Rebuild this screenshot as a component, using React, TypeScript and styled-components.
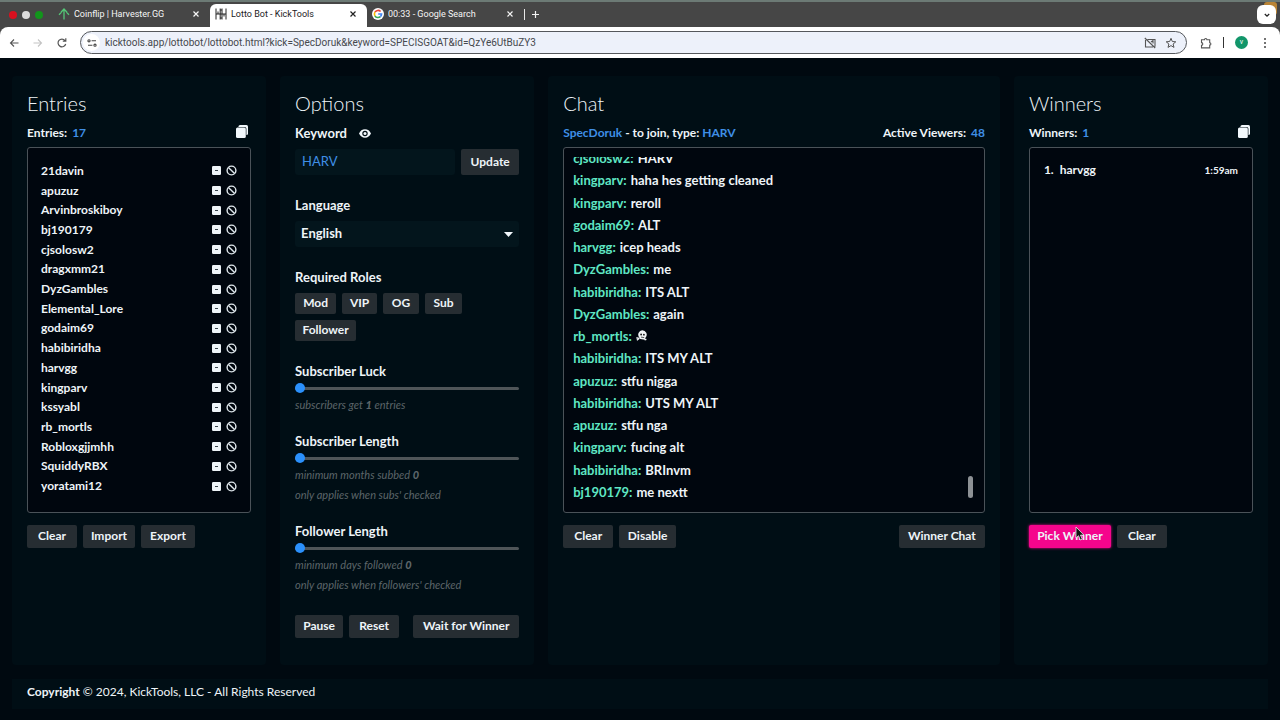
import React from "react";
import styled, { createGlobalStyle } from "styled-components";

const GlobalStyle = createGlobalStyle`
  *, *::before, *::after { box-sizing: border-box; }
  body {
    margin: 0;
    background: #000910;
    color: #eef4f8;
    font: 700 13px/20px Lato, "Open Sans", sans-serif;
  }
  button, input, select { font: inherit; color: inherit; }
  h2, p, ul, ol { margin: 0; padding: 0; }
  ul, ol { list-style: none; }
`;

/* ---------- browser chrome ---------- */

const Browser = styled.header`
  background: #464646;
  border-top: 2px solid #6c7a75;
  font-family: Roboto, Inter, sans-serif;
  font-weight: 400;
`;

const TabStrip = styled.div`
  display: flex;
  align-items: center;
  height: 25px;
  padding-right: 4px;
`;

const Lights = styled.div`
  display: flex;
  gap: 5px;
  width: 53px;
  padding-left: 9px;
`;

const Light = styled.span<{ $color: string }>`
  width: 8px;
  height: 8px;
  border-radius: 50%;
  background: ${(p) => p.$color};
`;

const Tab = styled.div<{ $active?: boolean }>`
  display: flex;
  align-items: center;
  gap: 4px;
  flex: 0 1 157px;
  align-self: flex-end;
  height: 23px;
  padding: 0 10px 3px 5px;
  border-radius: 6px 6px 0 0;
  background: ${(p) => (p.$active ? "#fff" : "transparent")};
  color: ${(p) => (p.$active ? "#222" : "#f6f6f6")};
  svg { flex: none; }
`;

const TabTitle = styled.span`
  flex: 1;
  min-width: 0;
  overflow: hidden;
  white-space: nowrap;
  font-size: 9px;
  line-height: 14px;
`;

const PlainButton = styled.button`
  display: flex;
  align-items: center;
  justify-content: center;
  padding: 0;
  border: 0;
  background: none;
`;

const Divider = styled.span<{ $color: string }>`
  width: 1px;
  height: 11px;
  background: ${(p) => p.$color};
`;

const NewTab = styled(PlainButton)`
  margin-left: 6px;
`;

const TabSearch = styled(PlainButton)`
  width: 19px;
  height: 19px;
  margin-left: auto;
  border-radius: 6px;
  background: #fff;
  color: #222;
  box-shadow: 4px -6px 0 -3px #b98436;
`;

const Toolbar = styled.div`
  display: flex;
  align-items: center;
  gap: 12px;
  height: 31px;
  padding: 0 13px 0 8px;
  border-radius: 8px 8px 0 0;
  background: #fff;
  color: #555;
`;

const AddressBar = styled.label`
  display: flex;
  align-items: center;
  gap: 9px;
  flex: 1;
  height: 23px;
  margin-right: 1px;
  padding: 0 9px 0 2px;
  border: 1px solid #55585c;
  border-radius: 12px;
  background: #edf1fa;
`;

const SiteInfo = styled.span`
  display: flex;
  align-items: center;
  justify-content: center;
  width: 17px;
  height: 17px;
  margin-right: -4px;
  border-radius: 50%;
  background: #fff;
`;

const AddressInput = styled.input`
  flex: 1;
  min-width: 0;
  padding: 0;
  border: 0;
  outline: 0;
  background: none;
  color: #45484d;
  font-size: 10px;
  line-height: 16px;
`;

const ToolbarEnd = styled.div`
  display: flex;
  align-items: center;
  gap: 11px;
`;

const Avatar = styled.span`
  width: 13px;
  height: 13px;
  margin-right: 4px;
  border-radius: 50%;
  background: #12966a;
  color: #fff;
  font-size: 7px;
  line-height: 12px;
  text-align: center;
`;

/* ---------- page ---------- */

const Page = styled.main`
  padding: 18px 12px 12px;
`;

const Panels = styled.div`
  display: grid;
  grid-template-columns: minmax(0, 9fr) minmax(0, 9fr) minmax(0, 16fr) minmax(0, 9fr);
  gap: 14px;
`;

const Panel = styled.section`
  padding: 15px 15px 27px;
  border-radius: 4px;
  background: #000e15;
`;

const Title = styled.h2`
  font-size: 20px;
  line-height: 24px;
  font-weight: 300;
`;

const MetaRow = styled.div`
  display: flex;
  justify-content: space-between;
  align-items: center;
  height: 20px;
  margin: 8px 0 4px;
  font-size: 12px;
`;

const Accent = styled.span`
  color: #3f8fe6;
`;

const Count = styled(Accent)`
  margin-left: 2px;
`;

const CopyButton = styled(PlainButton)`
  margin-right: 3px;
  padding-bottom: 3px;
`;

const Box = styled.div`
  position: relative;
  height: 366px;
  border: 1px solid #4a5258;
  border-radius: 3px;
  background: #00060e;
`;

const Entries = styled.ul`
  display: flex;
  flex-direction: column;
  height: 100%;
  padding: 13px 13px 16px;
`;

const Entry = styled.li`
  display: flex;
  align-items: center;
  flex: 1;
  gap: 5px;
  min-height: 0;
`;

const Name = styled.span`
  flex: 1;
  font-size: 12px;
  line-height: 18px;
`;

const Actions = styled.div`
  display: flex;
  flex-wrap: wrap;
  gap: 6px;
  margin-top: 12px;
`;

const Button = styled.button<{ $width: number; $height?: number; $push?: boolean; $primary?: boolean }>`
  min-width: ${(p) => p.$width}px;
  height: ${(p) => p.$height ?? 23}px;
  margin-left: ${(p) => (p.$push ? "auto" : "0")};
  padding: 0 0 1px;
  border: 0;
  border-radius: 2px;
  background: ${(p) => (p.$primary ? "#f5058c" : "#262d32")};
  box-shadow: ${(p) => (p.$primary ? "0 0 3px #f5058c" : "none")};
  font-size: 12px;
  line-height: 18px;
  white-space: nowrap;
`;

const Label = styled.label`
  display: block;
  line-height: 20px;
`;

const KeywordHead = styled.div`
  display: flex;
  align-items: center;
  gap: 12px;
  height: 20px;
  margin: 8px 0 6px;
`;

const KeywordRow = styled.div`
  display: flex;
  gap: 6px;
`;

const KeywordInput = styled.input`
  flex: 1;
  min-width: 0;
  height: 26px;
  padding: 0 7px 2px;
  border: 0;
  border-radius: 3px;
  background: #03151c;
  color: #3f8fe6;
  font-weight: 400;
`;

const Field = styled.div`
  margin-top: 20px;
`;

const SelectWrap = styled.div`
  position: relative;
  margin-top: 6px;
  svg {
    position: absolute;
    right: 6px;
    top: 11px;
    pointer-events: none;
  }
`;

const Select = styled.select`
  display: block;
  width: 100%;
  height: 26px;
  padding: 0 6px 2px;
  border: 0;
  border-radius: 3px;
  background: #03151c;
  appearance: none;
`;

const Roles = styled.div`
  display: flex;
  flex-wrap: wrap;
  gap: 6px;
  margin-top: 6px;
`;

const SliderField = styled.div`
  & + & { margin-top: 16px; }
`;

const Slider = styled.input`
  display: block;
  width: 100%;
  height: 14px;
  margin: 0;
  appearance: none;
  background: none;
  &::-webkit-slider-runnable-track {
    height: 3px;
    border-radius: 2px;
    background: #4f5558;
  }
  &::-webkit-slider-thumb {
    appearance: none;
    width: 10px;
    height: 10px;
    margin-top: -4px;
    border-radius: 50%;
    background: #2b90fb;
  }
`;

const Hint = styled.p`
  color: #5c6569;
  font-size: 11px;
  font-style: italic;
  font-weight: 400;
  line-height: 20px;
  b { font-weight: 900; }
`;

const ChatView = styled.div`
  height: 100%;
  padding: 9px;
`;

const ChatClip = styled.div`
  display: flex;
  flex-direction: column;
  justify-content: flex-end;
  height: 100%;
  overflow: hidden;
`;

const ChatLog = styled.ol`
  display: flex;
  flex-direction: column;
  flex: none;
  height: 356px;
`;

const Message = styled.li`
  display: flex;
  align-items: center;
  flex: 1;
  gap: 4px;
`;

const Author = styled.span`
  color: #5fe6c4;
`;

const ScrollThumb = styled.span`
  position: absolute;
  right: 11px;
  bottom: 14px;
  width: 5px;
  height: 22px;
  border-radius: 3px;
  background: #8d9195;
`;

const WinnerRow = styled.li`
  display: flex;
  gap: 6px;
  padding: 12px 14px;
  font-size: 12px;
`;

const Time = styled.time`
  margin-left: auto;
  font-size: 10px;
`;

const CursorHost = styled.span`
  position: relative;
  display: flex;
`;

const Cursor = styled.svg`
  position: absolute;
  left: 46px;
  top: 1px;
`;

const Footer = styled.footer`
  margin-top: 14px;
  padding: 3px 15px 7px;
  background: #000e15;
  font-size: 12px;
  font-weight: 400;
`;

/* ---------- icons ---------- */

const CloseIcon = () => (
  <svg width="8" height="8" viewBox="0 0 8 8" stroke="currentColor" strokeWidth="1.2">
    <path d="M1.5 1.5l5 5M6.5 1.5l-5 5" />
  </svg>
);

const HarvesterIcon = () => (
  <svg width="12" height="12" viewBox="0 0 12 12" fill="none" stroke="#55c878" strokeWidth="1.3">
    <path d="M6 11.500V1.200M3 4.200L6 1l3 3.200M1 6.800l2.400-2.400M11 6.800L8.600 4.400" />
  </svg>
);

const KickToolsIcon = () => (
  <svg width="12" height="12" viewBox="0 0 12 12" fill="none" stroke="#222" strokeWidth="1">
    <path d="M1 .5v11M5.200 .5v11M7 .5v11M11 .5v11M1 6h10M3 3.500V6M9 6v2.500M5.200 2H7M5.200 10H7" />
  </svg>
);

const GoogleIcon = () => (
  <svg width="12" height="12" viewBox="0 0 12 12" fill="none">
    <circle cx="6" cy="6" r="6" fill="#fff" />
    <path d="M2.900 4.200A3.600 3.600 0 0 1 8.600 3.500" stroke="#ea4335" strokeWidth="1.600" />
    <path d="M2.900 4.200a3.600 3.600 0 0 0 0 3.600" stroke="#fbbc05" strokeWidth="1.600" />
    <path d="M2.900 7.800a3.600 3.600 0 0 0 5.500.8" stroke="#34a853" strokeWidth="1.600" />
    <path d="M6.200 6h3.400a3.600 3.600 0 0 1-1.200 2.600" stroke="#4285f4" strokeWidth="1.600" />
  </svg>
);

const PlusIcon = () => (
  <svg width="9" height="9" viewBox="0 0 9 9" stroke="#f2f2f2" strokeWidth="1.2">
    <path d="M4.500 1v7M1 4.500h7" />
  </svg>
);

const ChevronIcon = () => (
  <svg width="8" height="8" viewBox="0 0 8 8" fill="none" stroke="currentColor" strokeWidth="1.3">
    <path d="M1.800 3L4 5.200 6.200 3" />
  </svg>
);

const ArrowIcon = ({ back }: { back?: boolean }) => (
  <svg width="12" height="12" viewBox="0 0 12 12" fill="none" stroke={back ? "#555" : "#c4c4c4"} strokeWidth="1.1">
    <path d={back ? "M10.500 6h-8M6 2.500L2.500 6 6 9.500" : "M1.500 6h8M6 2.500L9.500 6 6 9.500"} />
  </svg>
);

const ReloadIcon = () => (
  <svg width="12" height="12" viewBox="0 0 12 12" fill="none" stroke="#555" strokeWidth="1.2">
    <path d="M9.700 7A3.900 3.900 0 1 1 9 3.500M9.800 1.200v3H6.800" />
  </svg>
);

const TuneIcon = () => (
  <svg width="10" height="10" viewBox="0 0 10 10" fill="none" stroke="#444" strokeWidth="1.100">
    <circle cx="2" cy="2.800" r="1.100" />
    <path d="M4.600 2.800H9M1 7.200h4.400" />
    <circle cx="8" cy="7.200" r="1.100" />
  </svg>
);

const CastOffIcon = () => (
  <svg width="12" height="12" viewBox="0 0 12 12" fill="none" stroke="#555" strokeWidth="1.1">
    <path d="M3.500 2.500H11v7.200M9 10H1.500V3M.8 1l10.400 10M7 5l2-1.500v3" />
  </svg>
);

const StarIcon = () => (
  <svg width="12" height="12" viewBox="0 0 12 12" fill="none" stroke="#555" strokeWidth="1">
    <path d="M6 1.300l1.300 3.200 3.500.3-2.700 2.200.9 3.400L6 8.600l-3 1.800.9-3.400L1.200 4.800l3.500-.3z" />
  </svg>
);

const PuzzleIcon = () => (
  <svg width="12" height="12" viewBox="0 0 12 12" fill="none" stroke="#555" strokeWidth="1.100">
    <path d="M1.500 2.700h3a1.200 1.200 0 0 1 2.400 0h2.800v3a1.200 1.200 0 0 1 0 2.400v2.800H1.500V8.200a1.300 1.300 0 0 0 0-2.600z" />
  </svg>
);

const MoreIcon = () => (
  <svg width="4" height="12" viewBox="0 0 4 12" fill="#444">
    <circle cx="2" cy="2" r="1" />
    <circle cx="2" cy="6" r="1" />
    <circle cx="2" cy="10" r="1" />
  </svg>
);

const CopyIcon = () => (
  <svg width="12" height="13" viewBox="0 0 12 13">
    <rect x="2.500" y="0" width="9.500" height="10" rx="1.500" fill="#f2f8fc" />
    <rect x="-.6" y="2" width="11" height="12" rx="1.800" fill="#000e15" />
    <rect x="0" y="2.600" width="9.800" height="10.400" rx="1.500" fill="#f2f8fc" />
  </svg>
);

const MinusBoxIcon = () => (
  <svg width="9" height="9" viewBox="0 0 9 9">
    <rect width="9" height="9" rx="1.200" fill="#eef4f8" />
    <path d="M3 4.500h3" stroke="#37424a" strokeWidth="1" />
  </svg>
);

const BanIcon = () => (
  <svg width="11" height="11" viewBox="0 0 11 11" fill="none" stroke="#dfe7ec" strokeWidth="1.400">
    <circle cx="5.500" cy="5.500" r="4.400" />
    <path d="M2.400 2.400l6.200 6.200" />
  </svg>
);

const EyeIcon = () => (
  <svg width="12" height="9" viewBox="0 0 12 9">
    <path d="M0 4.500C1.200 1.800 3.300.3 6 .3s4.800 1.500 6 4.200C10.800 7.200 8.700 8.700 6 8.700S1.200 7.200 0 4.500z" fill="#f2f8fc" />
    <circle cx="6" cy="4.500" r="2.700" fill="#000e15" />
    <circle cx="6" cy="4.500" r="1.500" fill="#f2f8fc" />
  </svg>
);

const SkullIcon = () => (
  <svg width="11" height="11" viewBox="0 0 11 11">
    <path d="M6.200.3a4.400 4.400 0 0 1 3.400 7.300L9 9.800 4.200 9 2.900 6.900A4.300 4.300 0 0 1 6.200.3z" fill="#f0f3f5" />
    <path d="M.4 7.800l3 .8M.9 10.200l2.400-2M8.600 9.900l1.800-.6" stroke="#f0f3f5" strokeWidth="1.400" />
    <circle cx="5.100" cy="4.500" r=".9" fill="#111" />
    <circle cx="7.900" cy="4.700" r=".9" fill="#111" />
    <path d="M5 7.100l3.200.5" stroke="#111" strokeWidth=".7" />
  </svg>
);

/* ---------- data ---------- */

const entries = [
  "21davin", "apuzuz", "Arvinbroskiboy", "bj190179", "cjsolosw2", "dragxmm21",
  "DyzGambles", "Elemental_Lore", "godaim69", "habibiridha", "harvgg", "kingparv",
  "kssyabl", "rb_mortls", "Robloxgjjmhh", "SquiddyRBX", "yoratami12",
];

const messages: [string, React.ReactNode][] = [
  ["cjsolosw2", "HARV"],
  ["kingparv", "haha hes getting cleaned"],
  ["kingparv", "reroll"],
  ["godaim69", "ALT"],
  ["harvgg", "icep heads"],
  ["DyzGambles", "me"],
  ["habibiridha", "ITS ALT"],
  ["DyzGambles", "again"],
  ["rb_mortls", <SkullIcon key="skull" />],
  ["habibiridha", "ITS MY ALT"],
  ["apuzuz", "stfu nigga"],
  ["habibiridha", "UTS MY ALT"],
  ["apuzuz", "stfu nga"],
  ["kingparv", "fucing alt"],
  ["habibiridha", "BRInvm"],
  ["bj190179", "me nextt"],
];

const roles: [string, number][] = [["Mod", 41], ["VIP", 35], ["OG", 36], ["Sub", 37], ["Follower", 61]];

const tabs = [
  { title: "Coinflip | Harvester.GG", icon: <HarvesterIcon /> },
  { title: "Lotto Bot - KickTools", icon: <KickToolsIcon />, active: true },
  { title: "00:33 - Google Search", icon: <GoogleIcon /> },
];

export default function App() {
  return (
    <>
      <GlobalStyle />
      <Browser>
        <TabStrip>
          <Lights>
            <Light $color="#d9101f" />
            <Light $color="#dcdcdc" />
            <Light $color="#12951b" />
          </Lights>
          {tabs.map((t) => (
            <Tab key={t.title} $active={t.active}>
              {t.icon}
              <TabTitle>{t.title}</TabTitle>
              <PlainButton aria-label="Close tab"><CloseIcon /></PlainButton>
            </Tab>
          ))}
          <Divider $color="#e8e8e8" />
          <NewTab aria-label="New tab"><PlusIcon /></NewTab>
          <TabSearch aria-label="Search tabs"><ChevronIcon /></TabSearch>
        </TabStrip>
        <Toolbar>
          <PlainButton aria-label="Back"><ArrowIcon back /></PlainButton>
          <PlainButton aria-label="Forward"><ArrowIcon /></PlainButton>
          <PlainButton aria-label="Reload"><ReloadIcon /></PlainButton>
          <AddressBar>
            <SiteInfo><TuneIcon /></SiteInfo>
            <AddressInput
              aria-label="Address"
              defaultValue="kicktools.app/lottobot/lottobot.html?kick=SpecDoruk&keyword=SPECISGOAT&id=QzYe6UtBuZY3"
            />
            <CastOffIcon />
            <StarIcon />
          </AddressBar>
          <ToolbarEnd>
            <PlainButton aria-label="Extensions"><PuzzleIcon /></PlainButton>
            <Divider $color="#333" />
            <Avatar>v</Avatar>
            <PlainButton aria-label="Menu"><MoreIcon /></PlainButton>
          </ToolbarEnd>
        </Toolbar>
      </Browser>

      <Page>
        <Panels>
          <Panel>
            <Title>Entries</Title>
            <MetaRow>
              <span>Entries: <Count>17</Count></span>
              <CopyButton aria-label="Copy entries"><CopyIcon /></CopyButton>
            </MetaRow>
            <Box>
              <Entries>
                {entries.map((name) => (
                  <Entry key={name}>
                    <Name>{name}</Name>
                    <PlainButton aria-label={`Remove ${name}`}><MinusBoxIcon /></PlainButton>
                    <PlainButton aria-label={`Ban ${name}`}><BanIcon /></PlainButton>
                  </Entry>
                ))}
              </Entries>
            </Box>
            <Actions>
              <Button $width={50}>Clear</Button>
              <Button $width={52}>Import</Button>
              <Button $width={54}>Export</Button>
            </Actions>
          </Panel>

          <Panel>
            <Title>Options</Title>
            <KeywordHead>
              <Label htmlFor="keyword">Keyword</Label>
              <PlainButton aria-label="Show keyword"><EyeIcon /></PlainButton>
            </KeywordHead>
            <KeywordRow>
              <KeywordInput id="keyword" defaultValue="HARV" />
              <Button $width={58} $height={26}>Update</Button>
            </KeywordRow>
            <Field>
              <Label htmlFor="language">Language</Label>
              <SelectWrap>
                <Select id="language" defaultValue="English">
                  <option>English</option>
                </Select>
                <svg width="9" height="5" viewBox="0 0 9 5" fill="#f2f8fc"><path d="M0 0h9L4.500 5z" /></svg>
              </SelectWrap>
            </Field>
            <Field>
              <Label as="div">Required Roles</Label>
              <Roles>
                {roles.map(([role, width]) => (
                  <Button key={role} $width={width} $height={21}>{role}</Button>
                ))}
              </Roles>
            </Field>
            <Field>
              <SliderField>
                <Label htmlFor="luck">Subscriber Luck</Label>
                <Slider id="luck" type="range" min={1} max={10} defaultValue={1} />
                <Hint>subscribers get <b>1</b> entries</Hint>
              </SliderField>
              <SliderField>
                <Label htmlFor="sub-length">Subscriber Length</Label>
                <Slider id="sub-length" type="range" min={0} max={12} defaultValue={0} />
                <Hint>minimum months subbed <b>0</b></Hint>
                <Hint>only applies when subs' checked</Hint>
              </SliderField>
              <SliderField>
                <Label htmlFor="follow-length">Follower Length</Label>
                <Slider id="follow-length" type="range" min={0} max={30} defaultValue={0} />
                <Hint>minimum days followed <b>0</b></Hint>
                <Hint>only applies when followers' checked</Hint>
              </SliderField>
            </Field>
            <Field>
              <KeywordRow>
                <Button $width={48}>Pause</Button>
                <Button $width={50}>Reset</Button>
                <Button $width={106} $push>Wait for Winner</Button>
              </KeywordRow>
            </Field>
          </Panel>

          <Panel>
            <Title>Chat</Title>
            <MetaRow>
              <span><Accent>SpecDoruk</Accent> - to join, type: <Accent>HARV</Accent></span>
              <span>Active Viewers: <Count>48</Count></span>
            </MetaRow>
            <Box>
              <ChatView>
                <ChatClip>
                  <ChatLog>
                    {messages.map(([author, text], i) => (
                      <Message key={i}>
                        <Author>{author}:</Author>
                        <span>{text}</span>
                      </Message>
                    ))}
                  </ChatLog>
                </ChatClip>
              </ChatView>
              <ScrollThumb />
            </Box>
            <Actions>
              <Button $width={50}>Clear</Button>
              <Button $width={57}>Disable</Button>
              <Button $width={86} $push>Winner Chat</Button>
            </Actions>
          </Panel>

          <Panel>
            <Title>Winners</Title>
            <MetaRow>
              <span>Winners: <Count>1</Count></span>
              <CopyButton aria-label="Copy winners"><CopyIcon /></CopyButton>
            </MetaRow>
            <Box>
              <ol>
                <WinnerRow>
                  <span>1.</span>
                  <span>harvgg</span>
                  <Time>1:59am</Time>
                </WinnerRow>
              </ol>
            </Box>
            <Actions>
              <CursorHost>
                <Button $width={82} $primary>Pick Winner</Button>
                <Cursor width="10" height="15" viewBox="0 0 10 15" aria-hidden="true">
                  <path d="M1 1v11l2.500-2.300L5.300 14l2-.9-1.800-4H9z" fill="#111" stroke="#e8e8e8" strokeWidth=".8" />
                </Cursor>
              </CursorHost>
              <Button $width={50}>Clear</Button>
            </Actions>
          </Panel>
        </Panels>
        <Footer><b>Copyright</b> © 2024, KickTools, LLC - All Rights Reserved</Footer>
      </Page>
    </>
  );
}
